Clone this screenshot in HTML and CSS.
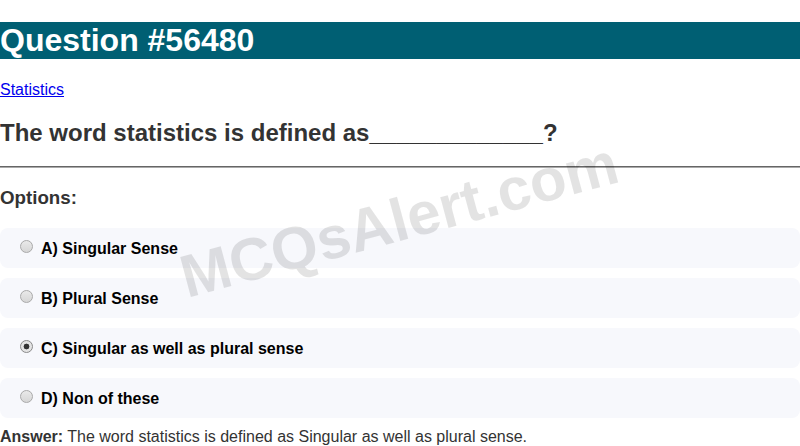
FILE: index.html
```html
<!DOCTYPE html>
<html lang="en">
<head>
<meta charset="utf-8">
<title>Question #56480</title>
<link rel="stylesheet" href="styles.css">
</head>
<body>
<div class="page">
  <h1 class="title">Question #56480</h1>
  <p class="category"><a href="#">Statistics</a></p>
  <h2 class="question">The word statistics is defined as_____________?</h2>
  <hr class="divider">
  <h3 class="options-title">Options:</h3>
  <div class="options">
    <label class="option"><input type="radio" name="q"> A) Singular Sense</label>
    <label class="option"><input type="radio" name="q"> B) Plural Sense</label>
    <label class="option"><input type="radio" name="q" checked> C) Singular as well as plural sense</label>
    <label class="option"><input type="radio" name="q"> D) Non of these</label>
  </div>
  <p class="answer"><strong>Answer:</strong> The word statistics is defined as Singular as well as plural sense.</p>
  <div class="watermark">MCQsAlert.com</div>
</div>
</body>
</html>
```

FILE: styles.css
```css
html, body {
  margin: 0;
  padding: 0;
  background: #fff;
}
body {
  font-family: "Liberation Sans", Arial, sans-serif;
  font-size: 16px;
  color: #333;
}
.page {
  position: relative;
  overflow: hidden;
  min-height: 446px;
  padding-top: 1px;
}
.title {
  font-size: 32px;
  margin: 21px 0 22.44px;
  background: #005f73;
  color: #fff;
  font-weight: bold;
}
.category {
  margin: 16px 0;
}
.category a {
  color: #0000ee;
}
.question {
  font-size: 24px;
  margin: 19.92px 0 18.92px;
  color: #333;
}
.divider {
  margin: 8px 0;
  border: 0;
  border-top: 1px solid #666;
  border-bottom: 1px solid #aaa;
  height: 0;
}
.options-title {
  font-size: 18.72px;
  margin: 18.72px 0 19.5px;
  color: #333;
}
.options {
  display: flex;
  flex-direction: column;
  gap: 10.5px;
}
.option {
  display: flex;
  align-items: center;
  background: #f7f8fc;
  border-radius: 8px;
  height: 39.5px;
  padding: 1px 15px 0;
  box-sizing: border-box;
  font-weight: bold;
  color: #000;
  line-height: 18.4px;
}
.option input {
  appearance: none;
  -webkit-appearance: none;
  margin: 0 8px 0 5px;
  width: 13px;
  height: 13px;
  border-radius: 50%;
  border: 1px solid #a9a9a9;
  background: linear-gradient(#e9e9e9, #d6d6d6);
  box-sizing: border-box;
  position: relative;
  top: -2px;
  flex: none;
}
.option input:checked {
  background: radial-gradient(circle, #333 0 2.6px, #e4e4e4 3.2px);
  border-color: #8a8a8a;
}
.answer {
  margin: 10px 0 0;
  color: #333;
}
.answer strong {
  color: #333;
}
.watermark {
  position: absolute;
  left: 399px;
  top: 220px;
  transform: translate(-50%, -50%) rotate(-15deg);
  font-size: 60px;
  font-weight: bold;
  color: rgba(0, 0, 0, 0.11);
  white-space: nowrap;
  pointer-events: none;
}
```
